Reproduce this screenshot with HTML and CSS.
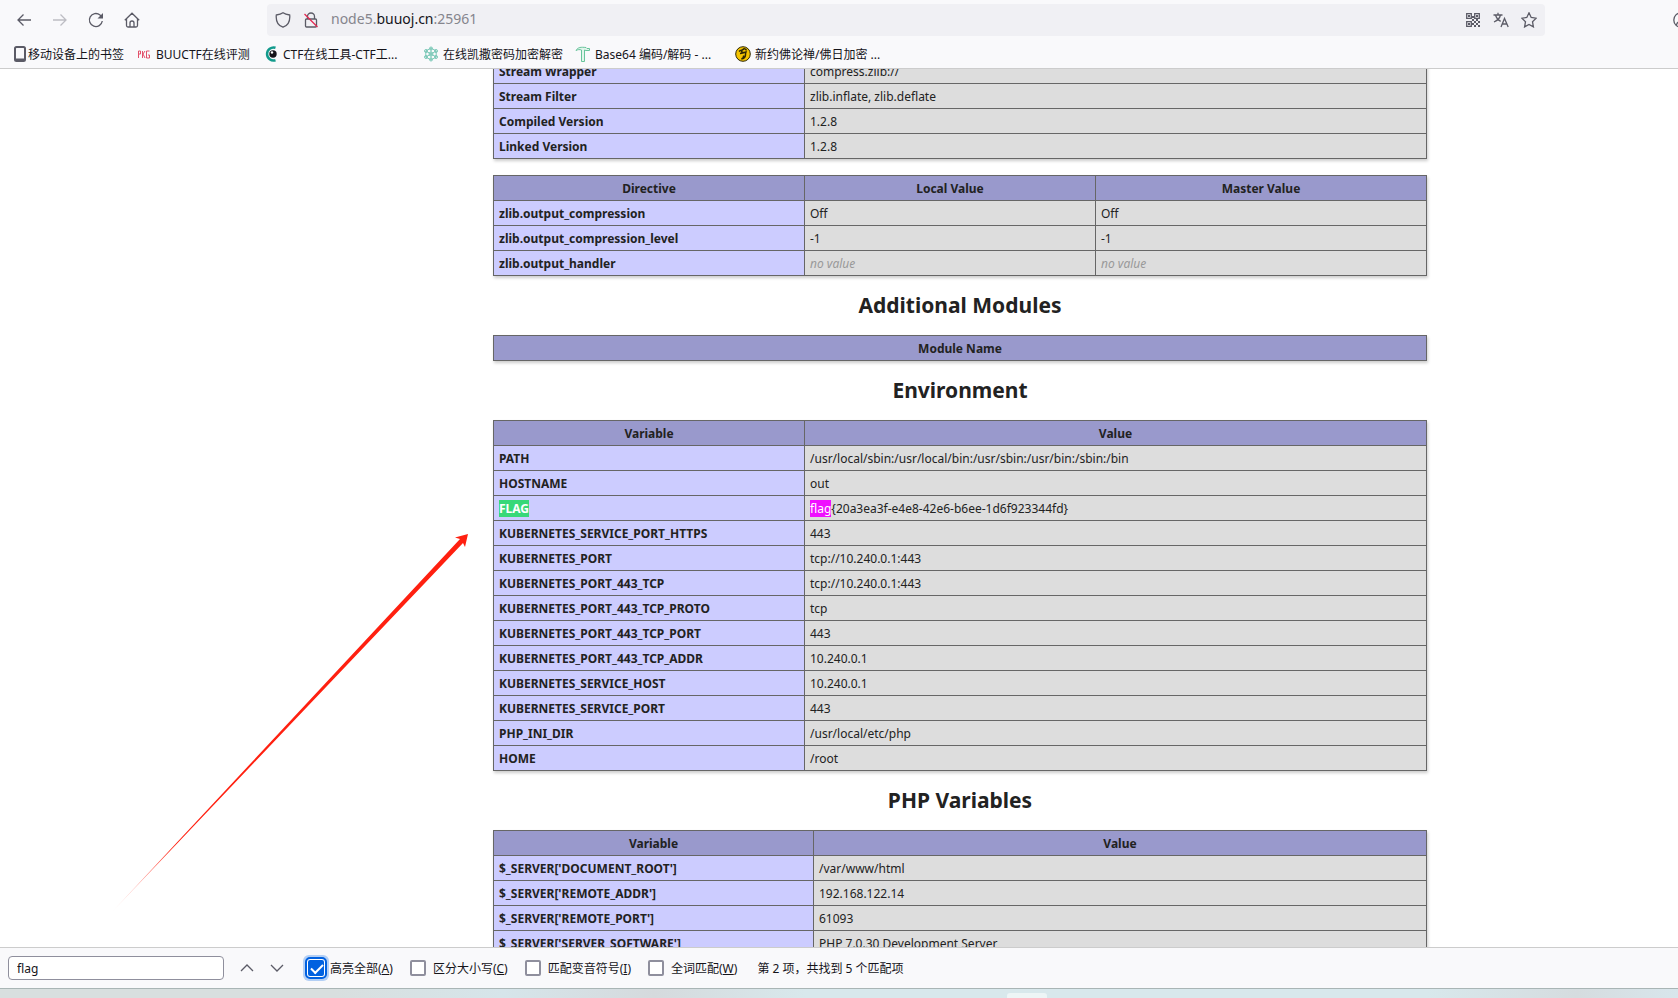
FILE: index.html
```
<!DOCTYPE html>
<html lang="zh-CN">
<head>
<meta charset="utf-8">
<title>phpinfo()</title>
<link rel="stylesheet" href="styles.css">
</head>

<body>
  <header class="chrome">
    <div class="toolbar">
      <button type="button" class="icon-button" aria-label="后退">
        <svg width="16" height="16" viewBox="0 0 16 16"><path d="M15 8H2M7.500 2.500L2 8l5.500 5.500"/></svg>
      </button>
      <button type="button" class="icon-button" aria-label="前进" disabled>
        <svg width="16" height="16" viewBox="0 0 16 16"><path d="M1 8h13M8.500 2.500L14 8l-5.500 5.500"/></svg>
      </button>
      <button type="button" class="icon-button" aria-label="刷新">
        <svg width="16" height="16" viewBox="0 0 16 16"><path d="M14.300 9A6.500 6.500 0 1 1 12 3l1.500 1.500"/><path class="solid" d="M15 1v5.500H9.500z"/></svg>
      </button>
      <button type="button" class="icon-button" aria-label="主页">
        <svg width="16" height="16" viewBox="0 0 16 16"><path d="M.8 8.200L8 1.200l7.200 7M2.500 7v6.500a1.500 1.500 0 0 0 1.500 1.500h8a1.500 1.500 0 0 0 1.500-1.500V7M6 15v-4a2 2 0 0 1 4 0v4"/></svg>
      </button>

      <div class="urlbar">
        <svg width="16" height="16" viewBox="0 0 16 16"><path d="M8 .8C6 2.300 3.500 2.800 1.300 3 .8 8.500 3 13.500 8 15.200c5-1.700 7.200-6.700 6.700-12.200C12.500 2.800 10 2.300 8 .8z"/></svg>
        <svg class="lock" width="16" height="16" viewBox="0 0 16 16"><path d="M4.500 7V4.500a3.500 3.500 0 0 1 7 0V7M3.500 7h9a1 1 0 0 1 1 1v6a1 1 0 0 1-1 1h-9a1 1 0 0 1-1-1V8a1 1 0 0 1 1-1z"/><path class="slash" d="M1.500 2l13 13"/></svg>
        <span class="url">node5.<b>buuoj.cn</b>:25961</span>
        <button type="button" class="url-action" aria-label="二维码">
          <svg width="16" height="16" viewBox="0 0 16 16"><path d="M1.700 1.700h4.600v4.600H1.700zM9.700 1.700h4.600v4.600H9.700zM1.700 9.700h4.600v4.600H1.700z"/><path class="solid" d="M3 3h2v2H3zM11 3h2v2h-2zM3 11h2v2H3zM7 4h2v2H7zM7 7h2v2H7zM9 9h2v2H9zM11 7h2v2h-2zM13 9h2v2h-2zM11 11h2v2h-2zM9 13h2v2H9zM13 13h2v2h-2zM7 11h2v2H7z"/></svg>
        </button>
        <button type="button" class="url-action" aria-label="翻译">
          <svg width="16" height="16" viewBox="0 0 16 16"><path d="M.5 3h9M5 .8V3M2.500 3c.8 3 2.700 5 5.200 6.300M7.500 3C6.800 6 4.500 8.500 1 10M8 15l3.500-8.500L15.200 15M9.300 12h4.700"/></svg>
        </button>
        <button type="button" class="url-action" aria-label="收藏">
          <svg width="16" height="16" viewBox="0 0 16 16"><path d="M8 .8l2.200 4.700 5 .7-3.700 3.500.9 5.200L8 12.500l-4.400 2.400.9-5.200L.8 6.200l5-.7z"/></svg>
        </button>
      </div>

      <button type="button" class="icon-button account" aria-label="账户">
        <svg width="16" height="16" viewBox="0 0 16 16"><circle cx="8" cy="8" r="7.200"/><path d="M3.500 13c.5-3 2-3.500 4.500-3.500s4 .5 4.500 3.500"/></svg>
      </button>
    </div>

    <nav class="bookmarks">
      <a class="bookmark bookmark-folder" href="#">
        <svg width="16" height="16" viewBox="0 0 16 16"><rect class="phone" x="3" y="1" width="10" height="14" rx="1.500"/><path class="phone" d="M3 13.500h10"/></svg>
        <span>移动设备上的书签</span>
      </a>
      <a class="bookmark" href="#">
        <svg width="16" height="16" viewBox="0 0 16 16"><path class="buu" d="M2.500 12V5h2v3h-2M6.500 5v7M9 5L7 8l2 4M13.500 5H10.500v7h3V9H12"/></svg>
        <span>BUUCTF在线评测</span>
      </a>
      <a class="bookmark" href="#">
        <svg width="16" height="16" viewBox="0 0 16 16"><path class="ctf-ring" d="M12.500 1.800A6.500 6.500 0 1 0 12.500 14.200"/><circle cx="10" cy="8" r="3.700" class="ctf-eye"/><circle cx="9" cy="6.500" r="1.200" class="ctf-glint"/></svg>
        <span>CTF在线工具-CTF工...</span>
      </a>
      <a class="bookmark" href="#">
        <svg width="16" height="16" viewBox="0 0 16 16"><g class="atom"><path d="M8 2l5.200 3v6L8 14l-5.200-3V5zM8 2v12M2.800 5l10.400 6M13.200 5L2.800 11"/><circle cx="8" cy="2.500" r="1.500"/><circle cx="13" cy="5" r="1.500"/><circle cx="13" cy="11" r="1.500"/><circle cx="8" cy="13.500" r="1.500"/><circle cx="3" cy="11" r="1.500"/><circle cx="3" cy="5" r="1.500"/><circle cx="8" cy="8" r="2"/></g></svg>
        <span>在线凯撒密码加密解密</span>
      </a>
      <a class="bookmark" href="#">
        <svg width="16" height="16" viewBox="0 0 16 16"><path class="tool" d="M1 4.500C3 1 6 1 11 1.500l1 1h2.500v2H11l-1.500-.5v11.500h-3V4C4.500 3.300 3 3.500 1 4.500z"/></svg>
        <span>Base64 编码/解码 - ...</span>
      </a>
      <a class="bookmark" href="#">
        <svg width="16" height="16" viewBox="0 0 16 16"><circle class="coin" cx="8" cy="8" r="7.300"/><path class="coin-mark" d="M4 5.500c2-2 3-.5 4-2s3-.5 3.500 1M5 7.500c3 0 4-1.500 6-1.500-1 2 0 3-1 5s-2 2-3.500 2c2-1 2.500-2 2-3.500M6 5.500l3 1.500"/></svg>
        <span>新约佛论禅/佛日加密 ...</span>
      </a>
    </nav>
  </header>

  <main class="viewport">
    <div class="phpinfo">
      <table>
        <tr><td class="e">Stream Wrapper</td><td class="v">compress.zlib://</td></tr>
        <tr><td class="e">Stream Filter</td><td class="v">zlib.inflate, zlib.deflate</td></tr>
        <tr><td class="e">Compiled Version</td><td class="v">1.2.8</td></tr>
        <tr><td class="e">Linked Version</td><td class="v">1.2.8</td></tr>
      </table>

      <table class="directives">
        <tr><th class="name">Directive</th><th class="local">Local Value</th><th>Master Value</th></tr>
        <tr><td class="e">zlib.output_compression</td><td class="v">Off</td><td class="v">Off</td></tr>
        <tr><td class="e">zlib.output_compression_level</td><td class="v">-1</td><td class="v">-1</td></tr>
        <tr><td class="e">zlib.output_handler</td><td class="v"><i>no value</i></td><td class="v"><i>no value</i></td></tr>
      </table>

      <h2>Additional Modules</h2>
      <table>
        <tr><th>Module Name</th></tr>
      </table>

      <h2>Environment</h2>
      <table>
        <tr><th class="name">Variable</th><th>Value</th></tr>
        <tr><td class="e">PATH</td><td class="v">/usr/local/sbin:/usr/local/bin:/usr/sbin:/usr/bin:/sbin:/bin</td></tr>
        <tr><td class="e">HOSTNAME</td><td class="v">out</td></tr>
        <tr><td class="e"><mark class="current">FLAG</mark></td><td class="v"><mark>flag</mark>{20a3ea3f-e4e8-42e6-b6ee-1d6f923344fd}</td></tr>
        <tr><td class="e">KUBERNETES_SERVICE_PORT_HTTPS</td><td class="v">443</td></tr>
        <tr><td class="e">KUBERNETES_PORT</td><td class="v">tcp://10.240.0.1:443</td></tr>
        <tr><td class="e">KUBERNETES_PORT_443_TCP</td><td class="v">tcp://10.240.0.1:443</td></tr>
        <tr><td class="e">KUBERNETES_PORT_443_TCP_PROTO</td><td class="v">tcp</td></tr>
        <tr><td class="e">KUBERNETES_PORT_443_TCP_PORT</td><td class="v">443</td></tr>
        <tr><td class="e">KUBERNETES_PORT_443_TCP_ADDR</td><td class="v">10.240.0.1</td></tr>
        <tr><td class="e">KUBERNETES_SERVICE_HOST</td><td class="v">10.240.0.1</td></tr>
        <tr><td class="e">KUBERNETES_SERVICE_PORT</td><td class="v">443</td></tr>
        <tr><td class="e">PHP_INI_DIR</td><td class="v">/usr/local/etc/php</td></tr>
        <tr><td class="e">HOME</td><td class="v">/root</td></tr>
      </table>

      <h2>PHP Variables</h2>
      <table class="variables">
        <tr><th class="name">Variable</th><th>Value</th></tr>
        <tr><td class="e">$_SERVER['DOCUMENT_ROOT']</td><td class="v">/var/www/html</td></tr>
        <tr><td class="e">$_SERVER['REMOTE_ADDR']</td><td class="v">192.168.122.14</td></tr>
        <tr><td class="e">$_SERVER['REMOTE_PORT']</td><td class="v">61093</td></tr>
        <tr><td class="e">$_SERVER['SERVER_SOFTWARE']</td><td class="v">PHP 7.0.30 Development Server</td></tr>
      </table>
    </div>

    <svg class="arrow" width="356" height="378" viewBox="0 0 356 378" aria-hidden="true">
      <defs>
        <linearGradient id="fade" gradientUnits="userSpaceOnUse" x1="0" y1="378" x2="356" y2="0">
          <stop offset="0" stop-color="#ff2010" stop-opacity="0.1"/>
          <stop offset="0.18" stop-color="#ff2010"/>
        </linearGradient>
      </defs>
      <path fill="url(#fade)" d="M0 378L348 5 343 3.500 356 0 353 13 351 9z"/>
    </svg>
  </main>

  <form class="findbar">
    <input type="text" class="find-text" value="flag" aria-label="在页面中查找">
    <button type="button" class="find-step" aria-label="上一个">
      <svg width="16" height="16" viewBox="0 0 16 16"><path d="M2 11l6-6 6 6"/></svg>
    </button>
    <button type="button" class="find-step" aria-label="下一个">
      <svg width="16" height="16" viewBox="0 0 16 16"><path d="M2 5l6 6 6-6"/></svg>
    </button>
    <label class="option highlight"><input type="checkbox" checked>高亮全部(<u>A</u>)</label>
    <label class="option"><input type="checkbox">区分大小写(<u>C</u>)</label>
    <label class="option"><input type="checkbox">匹配变音符号(<u>I</u>)</label>
    <label class="option"><input type="checkbox">全词匹配(<u>W</u>)</label>
    <span class="matches">第 2 项，共找到 5 个匹配项</span>
  </form>

  <footer class="taskbar"><div class="task"></div></footer>
</body>
</html>
```

FILE: styles.css
```
* {
  box-sizing: border-box;
}

body {
  margin: 0;
  height: 100vh;
  display: flex;
  flex-direction: column;
  overflow: hidden;
  background-color: #fff;
  color: #15141a;
  font-family: "Noto Sans", "Noto Sans CJK SC", sans-serif;
  font-size: 12px;
}

button {
  display: flex;
  padding: 0;
  border: none;
  background: none;
  color: inherit;
}

svg {
  flex: none;
  fill: none;
  stroke: currentColor;
  stroke-width: 1.3;
}

.solid {
  fill: currentColor;
  stroke: none;
}

/* browser toolbar */
.chrome {
  flex: none;
  height: 69px;
  background-color: #f9f9fb;
  border-bottom: 1px solid #ccc;
}

.toolbar {
  height: 40px;
  display: flex;
  align-items: center;
  padding-left: 16px;
  color: #5b5b66;
  overflow: hidden;
}

.icon-button {
  flex: none;
  margin-right: 20px;
}

.icon-button:disabled {
  color: #bdbdc3;
}

.urlbar {
  flex: 1;
  height: 32px;
  display: flex;
  align-items: center;
  gap: 12px;
  margin-left: 107px;
  padding: 0 8px;
  border-radius: 4px;
  background-color: #f0f0f4;
}

.urlbar .slash {
  stroke: #e22850;
}

.url {
  flex: 1;
  color: #85858d;
  font-size: 14px;
  line-height: 20px;
  padding-bottom: 2px;
}

.url b {
  color: #15141a;
  font-weight: normal;
}

.account {
  margin: 0 -11px 0 128px;
}

.bookmarks {
  display: grid;
  grid-template-columns: 124px 127px 160px 152px 160px auto;
  height: 28px;
  padding-left: 12px;
  align-items: center;
}

.bookmark {
  display: flex;
  align-items: center;
  gap: 4px;
  color: inherit;
  text-decoration: none;
  white-space: nowrap;
}

.bookmark-folder {
  gap: 0;
}

.phone {
  stroke: #5b5b66;
  stroke-width: 2;
}

.buu {
  stroke: #e2506a;
  stroke-width: 1;
}

.ctf-ring {
  stroke: #129a8c;
  stroke-width: 2.5;
}

.ctf-eye {
  fill: #15141a;
  stroke: none;
}

.ctf-glint {
  fill: #fff;
  stroke: none;
}

.atom {
  stroke: #7cc9b8;
  stroke-width: 1;
}

.tool {
  fill: #e2f5ec;
  stroke: #67c49b;
  stroke-width: 1;
}

.coin {
  fill: #f5c400;
  stroke: #2d2705;
  stroke-width: 1;
}

.coin-mark {
  stroke: #2d2705;
  stroke-width: 1.5;
}

/* page */
.viewport {
  flex: 1;
  min-height: 0;
  position: relative;
  overflow: hidden;
  padding-left: 242px;
}

.phpinfo {
  margin-top: -11px;
  color: #222;
}

.phpinfo table {
  width: 934px;
  margin: 0 auto 16px;
  border-collapse: collapse;
  table-layout: fixed;
  box-shadow: 1px 2px 3px #ccc;
}

.phpinfo th,
.phpinfo td {
  height: 25px;
  padding: 1px 5px 0;
  border: 1px solid #666;
  line-height: 18px;
}

.phpinfo th {
  background-color: #99c;
}

.phpinfo h2 {
  margin: 16px 0;
  font-size: 21px;
  line-height: 27px;
  text-align: center;
}

.e,
.name {
  width: 311px;
}

.e {
  background-color: #ccf;
  font-weight: bold;
}

.v {
  background-color: #ddd;
}

.v i {
  color: #999;
}

.local {
  width: 291px;
}

.variables .name {
  width: 320px;
}

mark {
  background-color: #ef0fff;
  color: #fff;
}

mark.current {
  background-color: #38d878;
}

.arrow {
  position: absolute;
  left: 112px;
  top: 465px;
  stroke: none;
}

/* find in page */
.findbar {
  flex: none;
  height: 41px;
  display: flex;
  align-items: center;
  padding: 0 8px;
  background-color: #f9f9fb;
  border-top: 1px solid #ccc;
}

.find-text {
  width: 216px;
  height: 24px;
  margin-right: 15px;
  padding: 0 8px;
  border: 1px solid #8f8f9d;
  border-radius: 4px;
  background-color: #fff;
  color: inherit;
  font: inherit;
}

.find-step {
  margin-right: 14px;
  color: #5b5b66;
}

.option {
  display: flex;
  align-items: center;
  margin-right: 17px;
}

.option input {
  appearance: none;
  width: 16px;
  height: 16px;
  margin: 0 7px 0 0;
  border: 2px solid #8f8f9d;
  border-radius: 2px;
  background-color: #fff;
}

.highlight {
  margin-left: 9px;
}

.highlight input {
  margin-right: 6px;
  border-color: #0061e0;
  background-color: #0061e0;
  outline: 2px solid #0061e0;
  outline-offset: 1px;
  box-shadow: 0 0 0 1px #fff, 0 0 0 5px #b3cff5;
}

.highlight input::before {
  content: "";
  display: block;
  width: 10px;
  height: 5px;
  margin: 2px 0 0 1px;
  border-left: 2px solid #fff;
  border-bottom: 2px solid #fff;
  transform: rotate(-45deg);
}

.matches {
  margin-left: 3px;
}

/* desktop taskbar */
.taskbar {
  flex: none;
  height: 10px;
  display: flex;
  justify-content: center;
  align-items: flex-end;
  padding-left: 376px;
  border-top: 1px solid #a9b5b5;
  background: linear-gradient(90deg, #d8dfdf, #d8dfdf 20%, #d6e5ea 30%, #d5dadd 39%, #d8e8ec 48%, #d8e8ec 85%, #d5dcdf 94%, #d8e6ec);
}

.task {
  width: 40px;
  height: 5px;
  border-radius: 3px 3px 0 0;
  background-color: #edf5f6;
}
```
